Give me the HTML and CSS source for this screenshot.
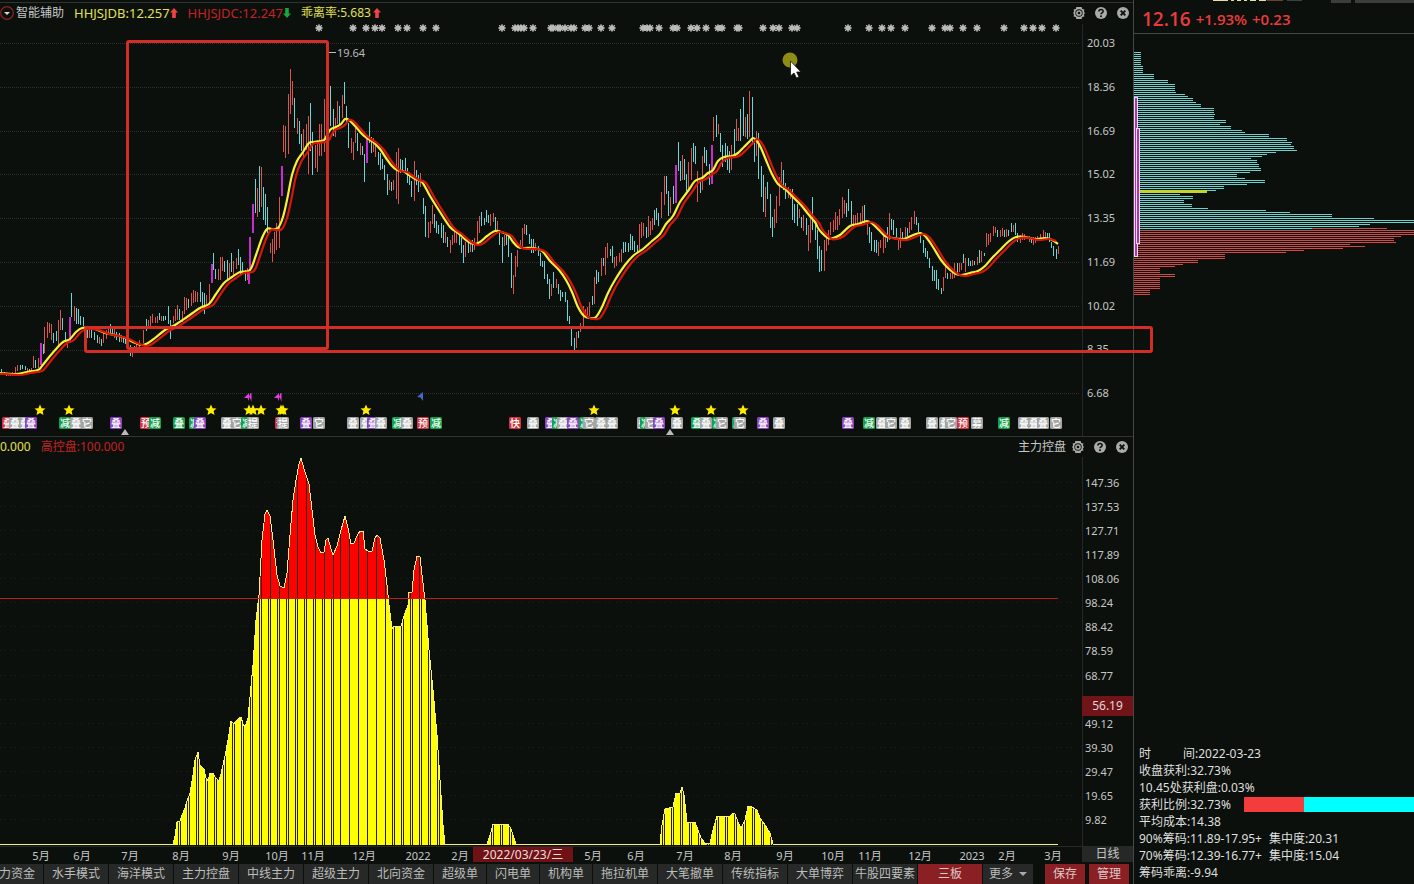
FILE: index.html
```html
<!DOCTYPE html>
<html lang="zh-CN">
<head>
<meta charset="utf-8">
<title>主力控盘</title>
<link rel="stylesheet" href="styles.css">
</head>
<body>
<svg class="defs" aria-hidden="true">
  <defs>
    <symbol id="gear" viewBox="0 0 14 14">
      <path d="M4.4 1h5.2l.6 2 2.2.4-.5 2.1 1 1.5-1 1.5.5 2.1-2.2.4-.6 2H4.4l-.6-2-2.2-.4.5-2.1-1-1.5 1-1.5-.5-2.1 2.2-.4z" fill="#a9aaa9"/>
      <circle cx="7" cy="7" r="3.7" fill="#0c100d"/><circle cx="7" cy="7" r="2.1" fill="none" stroke="#a9aaa9" stroke-width="1.5"/>
    </symbol>
    <symbol id="help" viewBox="0 0 14 14">
      <circle cx="7" cy="7" r="6" fill="#a9aaa9"/>
      <path d="M4.9 5.6C4.9 2.9 9.2 2.9 9.1 5.4 9.1 6.8 7 6.8 7 8.3" fill="none" stroke="#0c100d" stroke-width="1.6"/><circle cx="7" cy="10.3" r="1" fill="#0c100d"/>
    </symbol>
    <symbol id="close" viewBox="0 0 14 14">
      <circle cx="7" cy="7" r="6" fill="#a9aaa9"/><path d="M4.7 4.7l4.6 4.6m0-4.6L4.7 9.3" stroke="#0c100d" stroke-width="1.9"/>
    </symbol>
    <symbol id="arrow" viewBox="0 0 8 10"><path d="M4 0l4 4.6H5.8V10H2.2V4.600H0z" fill="currentColor"/></symbol>
  </defs>
</svg>
<div class="app">
  <main class="charts">
    <section class="panel">
      <header class="panel-head">
        <div class="legend">
          <button class="icon-btn" aria-label="展开"><svg width="14" height="14" viewBox="0 0 14 14"><circle cx="7" cy="7" r="6.300" fill="none" stroke="#8e2222" stroke-width="1.2"/><path d="M4 6h6L7 9z" fill="#d8d8d8"/></svg></button>
          <span class="title">智能辅助</span>
          <span class="reading yellow">HHJSJDB:12.257<svg class="up"><use href="#arrow"/></svg></span>
          <span class="reading red">HHJSJDC:12.247<svg class="down"><use href="#arrow"/></svg></span>
          <span class="reading small yellow">乖离率:5.683<svg class="up"><use href="#arrow"/></svg></span>
        </div>
        <div class="tools">
          <button class="icon-btn" aria-label="设置"><svg><use href="#gear"/></svg></button>
          <button class="icon-btn" aria-label="帮助"><svg><use href="#help"/></svg></button>
          <button class="icon-btn" aria-label="关闭"><svg><use href="#close"/></svg></button>
        </div>
      </header>
      <div class="plot">
        <svg id="price" class="chart" viewBox="0 24 1082 412"></svg>
        <ol class="axis price-axis"><li>20.03</li><li>18.36</li><li>16.69</li><li>15.02</li><li>13.35</li><li>11.69</li><li>10.02</li><li>8.35</li><li>6.68</li></ol>
      </div>
    </section>
    <section class="panel second">
      <header class="panel-head low">
        <div class="legend wide"><span class="yellow">0.000</span><span class="red">高控盘:100.000</span></div>
        <div class="tools"><span class="title">主力控盘</span>
          <button class="icon-btn" aria-label="设置"><svg><use href="#gear"/></svg></button>
          <button class="icon-btn" aria-label="帮助"><svg><use href="#help"/></svg></button>
          <button class="icon-btn" aria-label="关闭"><svg><use href="#close"/></svg></button>
        </div>
      </header>
      <div class="plot">
        <svg id="control" class="chart" viewBox="0 457 1082 407"></svg>
        <div class="axis-col">
          <ol class="axis control-axis"><li>147.36</li><li>137.53</li><li>127.71</li><li>117.89</li><li>108.06</li><li>98.24</li><li>88.42</li><li>78.59</li><li>68.77</li><li></li><li>49.12</li><li>39.30</li><li>29.47</li><li>19.65</li><li>9.82</li></ol>
          <output class="axis-mark">56.19</output>
          <button class="period">日线</button>
        </div>
      </div>
    </section>
    <nav class="toolbar">
      <button>主力资金</button><button>水手模式</button><button>海洋模式</button><button>主力控盘</button><button>中线主力</button><button>超级主力</button><button>北向资金</button><button class="short">超级单</button><button class="short">闪电单</button><button class="short">机构单</button><button>拖拉机单</button><button>大笔撤单</button><button>传统指标</button><button>大单博弈</button><button>牛股四要素</button><button class="on">三板</button><button class="more">更多<svg width="8" height="4" viewBox="0 0 8 4"><path d="M0 0h8L4 4z" fill="#aaa"/></svg></button><button class="on act first">保存</button><button class="on act">管理</button>
    </nav>
  </main>
  <aside class="side">
    <svg class="cut" viewBox="0 0 280 4" aria-hidden="true"><path d="M79 0h15v1H79zM97 0h3v1h-3zM103 0h4v1h-4zM110 0h3v1h-3zM116 0h6v1h-6zM125 0h7v1h-7z" fill="#e6dfa0"/><path d="M133 0h16v1h-16z" fill="#6e4034"/><path d="M153 0h15v1h-15z" fill="#3a4340"/><path d="M197 0h20v3h-20zM221 0h59v3h-59z" fill="#3b3e3c"/></svg>
    <div class="quote"><strong>12.16</strong><span>+1.93%</span><span>+0.23</span></div>
    <svg id="chips" class="chart" viewBox="1134 34 280 270"></svg>
    <div class="info">
      <p><span class="spread">时</span>间:2022-03-23</p>
      <p>收盘获利:32.73%</p>
      <p>10.45处获利盘:0.03%</p>
      <p class="ratio"><span>获利比例:32.73%</span><i class="bar"><b></b></i></p>
      <p>平均成本:14.38</p>
      <p>90%筹码:11.89-17.95+ <span class="gap">集中度:20.31</span></p>
      <p>70%筹码:12.39-16.77+ <span class="gap">集中度:15.04</span></p>
      <p>筹码乖离:-9.94</p>
    </div>
  </aside>
  <div class="mark tall"></div>
  <div class="mark flat"></div>
</div>
<script src="chart.js"></script>
</body>
</html>
```
FILE: styles.css
```css
* { box-sizing: border-box; }
body { margin: 0; background: #0c100d; color: #c6c7c6; font: 12px/16px "Noto Sans", "Noto Sans CJK SC", sans-serif; overflow-x: hidden; }
button { font: inherit; color: inherit; border: 0; padding: 0; background: none; white-space: nowrap; }
p, ol { margin: 0; padding: 0; list-style: none; }
.defs { position: absolute; width: 0; height: 0; }
.app { position: relative; display: flex; min-height: 100vh; }
.charts { flex: 1; min-width: 0; display: flex; flex-direction: column; overflow: hidden; }
.second { border-top: 1px solid #303331; }
.panel-head { display: flex; justify-content: space-between; align-items: center; height: 24px; padding: 2px 3px 0 0; background: linear-gradient(#303331, #303331) 0 2px / 100% 1px no-repeat; }
.panel-head.low { height: 20px; padding: 0 4px 0 0; background: none; }
.legend { display: flex; align-items: center; gap: 10px; font-size: 12px; }
.legend .icon-btn { margin-right: -8px; }
.icon-btn, .icon-btn svg { display: block; width: 14px; height: 14px; }
.tools { display: flex; align-items: center; gap: 8px; }
.tools .title { margin-right: -3px; }
.reading { display: flex; align-items: center; gap: 0; font-size: 13px; }
.reading.small { gap: 2px; font-size: 12px; }
.reading svg { width: 8px; height: 10px; }
.yellow { color: #e2e052; }
.red { color: #c42222; }
.up { color: #f04444; }
.down { color: #16a83c; transform: rotate(180deg); }
.plot { display: grid; grid-template-columns: minmax(0, 1fr) 51px; }
.chart { display: block; width: 100%; height: auto; font-family: "Noto Sans", "Noto Sans CJK SC", sans-serif; }
.axis { display: flex; flex-direction: column; justify-content: space-between; border-left: 1px solid #262927; font-size: 11px; }
.axis li { height: 16px; }
.price-axis { padding: 11px 0 35px 4px; }
.control-axis { flex: 1; padding: 18px 0 18px 2px; }
.axis-col { position: relative; display: flex; flex-direction: column; }
.axis-mark { position: absolute; top: 239px; left: 0; right: 0; height: 20px; line-height: 20px; text-align: center; background: #701418; color: #e4d6d6; }
.period { height: 16px; margin: 0 0 2px; background: #252827; line-height: 16px; }
.toolbar { display: flex; gap: 1px; margin-left: -21px; height: 20px; }
.toolbar button { flex: 0 0 64px; height: 20px; background: #262927; color: #bcbdbc; line-height: 20px; }
.toolbar .short { flex-basis: 52px; }
.toolbar .on { background: #8a2024; color: #dcc8c8; }
.toolbar .more { flex-basis: 50px; }
.more svg { margin-left: 6px; vertical-align: 2px; }
.toolbar .act { flex-basis: 40px; margin-left: 3px; }
.toolbar .first { margin-left: 11px; }
.side { flex: 0 0 281px; display: flex; flex-direction: column; border-left: 1px solid #454846; }
.cut { display: block; width: 100%; height: 4px; }
.quote { display: flex; align-items: center; gap: 5px; height: 30px; padding-left: 8px; border-bottom: 1px solid #454846; color: #e83c3c; font: 600 15px/28px "Open Sans", "Noto Sans", sans-serif; }
.quote strong { font-size: 19px; font-weight: 600; }
.info { margin-top: auto; padding: 0 0 3px 5px; color: #dedfde; }
.info p { height: 17px; line-height: 17px; white-space: pre; }
.spread { margin-right: 32px; }
.gap { margin-left: 4px; }
.info .ratio { display: flex; align-items: center; }
.ratio span { flex: 0 0 105px; }
.bar { flex: 1; height: 15px; background: #00ffff; }
.bar b { display: block; width: 35%; height: 15px; background: #f43c3c; }
.mark { position: absolute; border: 3px solid #d22e26; border-radius: 3px; pointer-events: none; }
.mark.tall { left: 126px; top: 40px; width: 203px; height: 310px; }
.mark.flat { left: 84px; top: 326px; width: 1069px; height: 27px; }
.grid { stroke: #2a302b; stroke-dasharray: 1 1; }
.grid.dim { stroke: #1d211e; stroke-dasharray: 1 3 1 6; }
.tick { fill: #c6c7c6; font-size: 11px; text-anchor: middle; }
.tick.now { fill: #f0dede; font-size: 12px; }
.peak { fill: #b9bab9; font-size: 11px; }
.tag { fill: #ffffff; font-size: 10px; font-weight: 500; text-anchor: middle; }
```
FILE: chart.js
```js
const NS = 'http://www.w3.org/2000/svg';
function add(parent, name, attrs, text) {
  const el = document.createElementNS(NS, name);
  for (const k in attrs) el.setAttribute(k, attrs[k]);
  if (text) el.textContent = text;
  parent.appendChild(el);
  return el;
}
const nums = s => s.trim().split(/\s+/).map(t => t.split(',').map(Number));

// x, high, low
const up = nums(`4,372,375 8,373,376 12,372,376 15,367,373 17,365,371 27,368,371 31,368,372 33,356,368 38,358,368 44,327,353 47,322,338 49,323,333 51,324,340 58,320,345 60,310,330 67,340,348 74,306,321 89,330,338 99,337,344 103,333,343 106,330,339 108,326,335 114,328,338 121,335,342 132,349,357 136,344,350 139,340,348 143,330,343 148,320,329 150,316,326 152,314,323 155,317,323 157,316,323 161,316,321
173,316,323 175,309,321 177,305,320 182,311,322 184,297,314 186,298,310 191,293,306 193,290,303 195,291,302 197,292,302 206,295,307 209,284,303 218,269,280 220,257,280 222,257,271 229,263,279 233,261,275 236,258,269 247,268,280 257,188,217 261,167,207 270,243,253 272,239,262 274,232,254 276,223,250 279,197,248 283,125,152 285,126,158 288,94,154 290,69,114 292,81,105 297,118,134 303,129,157 306,124,150 308,116,174 315,145,168 317,140,172 319,124,156 321,124,156 324,99,152 326,110,145
335,118,137 337,101,124 342,95,118 351,138,153 353,142,160 355,128,143 360,143,155 373,138,152 375,143,157 389,180,190 393,180,190 396,152,199 398,148,204 414,161,201 420,173,187 428,222,238 430,221,233 432,205,224 445,232,243 450,240,253 452,235,245 454,232,243 456,233,243 465,242,257 470,240,252 474,238,250 477,221,243 479,216,233 490,214,226 493,213,222 497,221,230 504,235,246 513,275,294 515,256,277 517,250,267 520,240,248 522,228,246 524,224,234 535,243,251 551,284,296 556,279,288 576,332,348 580,323,332 583,306,326 585,309,317 587,307,315 589,302,316 594,277,304 601,258,276 605,247,275 607,243,258 614,257,268 616,256,266 619,253,262 621,249,262
639,224,250 641,222,238 643,223,236 648,216,237 650,221,235 652,218,230 661,192,218 664,176,205 670,197,213 682,155,180 688,162,190 691,148,180 697,171,202 702,156,190 713,117,141 718,124,134 731,145,170 736,119,141 738,128,141 745,117,137 749,91,137 756,131,156 765,187,217 774,209,228 776,196,223 779,177,206 781,162,187 788,187,198 790,189,199 799,209,218 803,215,231 808,225,251 810,213,243 824,240,271 826,233,251 828,230,245 830,222,235 833,220,232 835,212,230 837,216,230 839,209,225 842,197,218 844,200,214 853,215,227 855,215,226 857,213,225 860,213,225 862,206,222 867,222,235 878,242,256 880,240,248 883,235,253 885,233,248 889,213,240 898,238,250 900,228,248 905,227,237 909,222,233 911,217,230 914,211,224
943,277,291 945,266,278 950,273,279 952,268,279 954,263,278 959,263,272 961,263,270 965,258,272 972,260,266 977,257,265 981,251,262 986,233,247 988,234,245 990,233,242 993,226,236 995,227,233 1000,230,237 1002,228,236 1006,229,237 1013,225,232 1020,235,243 1022,233,240 1024,234,240 1029,236,242 1033,237,245 1035,237,243 1037,236,241 1040,234,240 1043,230,238 1045,232,238 1058,246,254`);
const down = nums(`1,369,372 6,373,376 10,373,376 20,365,370 22,365,369 25,366,370 29,369,372 35,360,368 43,344,354 53,333,343 56,331,341 62,318,330 65,332,341 71,293,317 76,308,324 78,309,324 80,316,325 83,317,326 87,330,338 91,330,338 94,332,340 97,335,343 101,339,346 110,324,333 112,328,336 116,332,340 119,333,342 123,337,343 125,337,344 130,345,356 134,346,353 146,319,331 159,313,320 163,316,321 165,316,320 168,306,324 170,320,339 179,309,320 188,299,308 200,282,302 202,292,306 204,293,314 213,253,270 215,269,279 224,261,272 227,260,281 231,253,272 238,249,265 240,257,275 242,262,273 245,270,281
255,179,213 259,166,212 263,187,220 265,194,225 267,207,233 294,98,128 299,121,144 301,134,151 310,103,151 312,132,175 330,86,126 333,109,136 339,106,125 344,82,104 346,106,122 348,123,148 357,133,151 362,146,155 364,154,182 369,122,143 371,137,153 378,152,165 380,153,170 382,159,169 384,165,180 387,174,195 391,182,191 400,159,173 402,160,171 405,158,172 407,168,183 409,172,185 411,181,197 416,170,185 418,175,192 423,198,214 425,206,237 434,214,228 436,221,233 438,225,234 441,223,238 443,225,243 447,237,247 459,235,245 461,238,253 463,245,263 468,240,253 472,240,252 481,212,226 484,218,225 486,210,222 488,215,223 495,217,231 499,230,245 502,237,263 506,234,245 508,235,257 511,253,288 526,225,235 529,234,244 531,239,253 533,239,253 538,246,256 540,253,266 542,261,267 544,261,279 547,274,284 549,279,299 553,272,288 558,284,294 560,290,301 562,292,297 565,292,302 567,300,321 569,316,324 571,327,346 574,338,350 578,331,338 592,296,305 596,270,284 598,272,282 603,258,266 610,249,256 612,246,263 623,242,253 625,242,252 628,243,252 630,234,250 632,236,250 634,241,252 637,245,253 646,227,238
654,210,225 656,208,220 658,213,226 666,176,194 668,191,216 673,186,204 678,142,171 680,161,181 684,159,180 686,174,191 693,143,162 695,146,164 700,180,193 704,147,163 706,150,166 709,164,185 716,115,137 720,133,152 722,145,167 725,143,162 727,146,170 729,151,173 734,129,155 740,109,141 743,97,136 747,114,139 752,97,145 754,143,162 758,133,179 761,166,197 763,175,212 767,182,199 770,194,228 772,217,237 783,170,190 785,183,199 792,189,220 794,204,223 797,204,226 801,217,228 806,218,235 812,197,230 815,223,240 817,230,259 819,246,272 821,250,271 846,203,217 848,189,211 851,201,224 864,205,225 869,227,243 871,232,251 874,240,252 876,240,253 887,227,242 891,219,230 893,220,235 896,228,237 902,232,239 907,228,236 916,217,225 918,223,232 920,233,243 923,240,253 925,248,257 927,251,259 929,258,268 932,266,281 934,270,281 936,270,289 938,279,290 941,288,294 947,273,279 957,263,273 963,254,263 968,258,266 970,261,266 974,261,265 979,250,263 984,253,256 997,230,237 1004,230,237 1008,230,236 1011,223,232 1015,223,235 1017,233,242 1031,237,243 1047,233,240 1049,233,242 1051,242,248 1053,246,256 1056,249,259`);
const strong = nums(`40,343,365 69,317,343 211,264,283 248,272,284 249,237,270 252,204,233 281,166,196 366,135,163 675,165,203 711,145,184`);
const average = nums(`0,373 15,374 27,372 38,370 42,366 50,356 57,348 63,342 70,339 76,332 82,328 88,328 95,329 105,333 115,335 125,338 133,342 142,345 148,343 155,338 165,330 175,325 187,317 200,308 209,304 216,294 224,283 232,277 240,272 250,270 256,255 262,238 267,229 272,229 278,228 283,217 287,200 292,175 297,161 303,152 309,143 314,142 321,141 325,139 330,130 336,127 341,124 345,119 349,120 356,127 362,134 367,138 373,142 380,149 386,158 392,166 397,170 403,171 409,175 415,179 422,182 430,196 440,212 450,227 458,233 466,240 474,244 480,242 487,236 495,231 501,232 508,235 513,242 518,247 524,248 533,248 542,251 550,261 559,270 566,280 572,292 578,307 584,316 590,318 596,317 602,307 608,293 615,280 625,265 634,255 643,249 652,241 660,234 666,224 673,216 680,202 688,191 695,181 702,178 708,173 713,170 718,161 724,157 732,156 738,153 744,147 750,141 753,138 757,141 761,148 766,160 772,174 778,184 785,189 793,197 801,205 809,215 815,222 818,228 822,233 828,238 833,238 840,235 850,226 858,224 867,221 873,224 879,230 885,236 893,238 903,239 911,236 920,233 926,237 933,247 941,260 949,269 956,274 962,275 970,273 978,271 985,266 992,258 1000,250 1008,242 1016,237 1025,237 1035,239 1045,238 1052,240 1058,244`);

const price = document.getElementById('price');
for (const y of [43, 87, 131, 174, 218, 262, 306, 350, 393]) add(price, 'path', { class: 'grid', d: `M0 ${y}.5H1080` });
function candles(list, color, w) {
  add(price, 'path', { d: list.map(([x, a, b]) => `M${x} ${a}h${w}V${b}h-${w}z`).join(''), fill: color, 'shape-rendering': 'crispEdges' });
}
candles(up, '#dc5450', 1);
candles(down, '#6cd4d2', 1);
candles(strong, '#c82ccc', 2);
const lagged = average.slice(0, -1).map(([x, y]) => [x + 4, y]).filter(p => p[0] <= 1058);
// Catmull-Rom smoothing
function curve(p) {
  let d = `M${p[0]}`;
  for (let i = 0; i < p.length - 1; i++) {
    const a = p[i - 1] || p[i], b = p[i], c = p[i + 1], e = p[i + 2] || c;
    d += `C${b[0] + (c[0] - a[0]) / 6} ${b[1] + (c[1] - a[1]) / 6} ${c[0] - (e[0] - b[0]) / 6} ${c[1] - (e[1] - b[1]) / 6} ${c}`;
  }
  return d;
}
add(price, 'path', { d: curve(average), fill: 'none', stroke: '#f8f236', 'stroke-width': 2.2 });
add(price, 'path', { d: curve([[0, 374], ...lagged.map(([x, y]) => [x, y + 1])]), fill: 'none', stroke: '#d8160a', 'stroke-width': 2.2 });

for (const x of [319,353,366,375,382,398,407,423,436,502,515,518,521,524,533,551,553,558,560,565,571,574,585,589,601,612,643,647,650,659,673,677,691,697,706,718,722,737,739,763,773,779,792,797,848,869,882,891,905,932,945,950,963,977,1004,1024,1033,1042,1056]) {
  add(price, 'circle', { cx: x, cy: 28, r: 2.8, fill: '#c9cac9' });
  add(price, 'path', { d: `M${x - 4} 28h8M${x} 24v8M${x - 3} 25l6 6M${x + 3} 25l-6 6`, stroke: '#b4b5b4', 'stroke-width': 1 });
}
for (const x of [40,69,211,249,253,261,281,283,366,594,675,711,743])
  add(price, 'path', { d: `M${x} 404.500l1.600 3.700 3.900.3-2.900 2.600.9 3.900-3.500-2.100-3.500 2.100.9-3.900-2.900-2.600 3.900-.3z`, fill: '#ffec00' });
for (const x of [244, 274]) {
  add(price, 'path', { d: `M${x} 398l5-5v8l-1.500-3zM${x + 5} 397l1.500-4h1v9l-1-3z`, fill: '#e83ce8' });
}
add(price, 'path', { d: 'M417 397l6-5v9l-2.500-3.500z', fill: '#4468d0' });
for (const x of [125, 670]) add(price, 'path', { d: `M${x} 429l4 6h-8z`, fill: '#b9bab9' });

const tone = { r: '#cf3440', w: '#a3a5a4', p: '#8b45bd', g: '#12a04a' };
for (const t of '2r叠 9w叠 19w叠 25p叠 59g减 70w叠 81w它 110p叠 140r预 149g减 173g叠 189g减 194p叠 221w叠 231w它 241g减 247w提 275r预 277w提 300p叠 313w它 347w叠 360w叠 367p叠 375w叠 392g减 401w叠 417r预 430g减 509r快 527w叠 545p叠 552g减 557w叠 567p叠 579g减 583w它 595w叠 606w叠 637w叠 640g减 645w它 653p叠 671w叠 691g叠 700w叠 712g减 716w它 732g减 734w它 757p叠 773w叠 842p叠 863g减 876w叠 885w它 899w叠 926w叠 939w叠 945w它 957r预 971w募 998g减 1018w叠 1028w叠 1037w叠 1050w它'.split(' ')) {
  const [, x, k, label] = t.match(/(\d+)(\w)(.)/);
  add(price, 'rect', { x, y: 417, width: 12, height: 12, rx: 1.5, fill: tone[k] });
  add(price, 'text', { class: 'tag', x: +x + 6, y: 427 }, label);
}
add(price, 'path', { d: 'M329 52.500h7', stroke: '#b9bab9' });
add(price, 'text', { class: 'peak', x: 337, y: 57 }, '19.64');
add(price, 'circle', { cx: 790, cy: 60, r: 7.500, fill: '#8e8c12' });
add(price, 'path', { d: 'M790.500 61v15l3.500-3 2.500 5 2.500-1-2.300-5h4.300z', fill: '#fff', stroke: '#111', 'stroke-width': 0.8 });

// Control-ratio histogram
const control = document.getElementById('control');
for (let i = 0; i < 15; i++) add(control, 'path', { class: 'grid dim', d: `M0 ${Math.round(482 + i * 24.07)}.5H1075` });
const outline = nums(`0,844 173,844 175,836 177,822 180,821 182,815 185,808 187,801 190,793 193,775 195,760 198,752 200,765 204,769 206,778 208,781 210,773 213,773 215,777 219,781 221,774 225,756 228,740 231,721 234,724 237,720 241,717 243,724 245,727 248,718 250,697 253,665 256,620 259,595 262,540 265,514 267,510 270,516 273,540 277,575 280,586 284,588 287,573 290,535 293,500 296,480 299,464 301,458 304,469 309,484 312,510 315,535 318,547 321,553 324,552 326,540 328,538 331,549 333,555 337,546 341,530 345,516 348,528 351,544 354,543 357,536 360,531 363,531 365,549 369,552 372,551 375,538 377,535 380,538 384,560 387,585 389,605 392,629 394,626 401,626 405,613 408,605 409,592 412,592 414,570 417,556 420,557 422,575 425,600 429,650 433,690 437,735 440,780 443,825 445,844 487,844 491,832 493,824 508,824 511,829 514,838 516,844 660,844 662,825 665,809 673,807 676,793 680,793 682,787 684,795 687,822 695,822 698,830 701,838 705,843 710,843 713,830 717,816 730,816 733,813 735,814 738,822 741,828 745,820 748,806 752,807 757,810 760,818 765,825 770,833 773,844 1058,844`);
const d = 'M' + outline.join('L');
const defs = add(control, 'defs', {});
add(add(defs, 'clipPath', { id: 'area' }), 'path', { d: d + 'V845H0z' });
const body = add(control, 'g', { 'clip-path': 'url(#area)', 'shape-rendering': 'crispEdges' });
add(body, 'rect', { x: 0, y: 599, width: 1058, height: 246, fill: '#ffff00' });
add(body, 'rect', { x: 0, y: 457, width: 1058, height: 142, fill: '#ff0000' });
let single = '', pair = '';
for (let x = 178; x < 1058; x += 9) {
  if (x < 335) { single += `M${x + 2} 457h1V845h-1z`; pair += `M${x} 599h1V845h-1z`; }
  else if (x < 390) single += `M${x} 457h1V845h-1z`;
  else { single += `M${x - 2} 457h1V845h-1z`; pair += `M${x} 599h1V845h-1z`; }
}
add(body, 'path', { d: single, fill: '#241c06' });
add(body, 'path', { d: pair, fill: '#241c06' });
add(control, 'path', { d, fill: 'none', stroke: '#f4f08a', 'shape-rendering': 'crispEdges' });
add(control, 'path', { d: 'M0 598.500H1058', stroke: '#c01c18' });
add(control, 'path', { d: 'M0 846.500H1082', stroke: '#262927' });
add(control, 'rect', { x: 473, y: 847, width: 100, height: 15, fill: '#6e1216' });
add(control, 'text', { class: 'tick now', x: 523, y: 859 }, '2022/03/23/三');
for (const t of '41:5月 82:6月 130:7月 181:8月 231:9月 277:10月 313:11月 364:12月 418:2022 460:2月 593:5月 636:6月 685:7月 733:8月 785:9月 833:10月 870:11月 920:12月 972:2023 1007:2月 1053:3月'.split(' ')) {
  const [x, label] = t.split(':');
  add(control, 'text', { class: 'tick', x, y: 860 }, label);
}

// Chip distribution: row count x bar length, top to bottom
const chips = document.getElementById('chips');
const rows = '7x7 4x9 3x20 2x34 4x41 1x42 1x51 1x54 2x59 1x62 2x67 3x80 1x81 2x80 2x92 1x86 2x97 1x108 1x111 2x135 2x153 1x158 1x157 2x160 1x163 1x142 1x133 1x128 1x117 2x123 2x125 2x127 1x116 2x103 1x111 2x131 1x113 2x90 1x82 1x70 1x46 2x59 2x50 2x58 1x74 1x132 1x156 2x198 1x240 2x280 1x236 1x225 1x178 3x280 1x267 2x260 1x262 1x216 1x231 1x209 1x170 1x152 3x91 2x64 1x49 1x41 3x26 2x41 6x26 3x16';
let y = 52;
for (const t of rows.split(' ')) {
  const [n, w] = t.split('x').map(Number);
  for (let i = 0; i < n; i++, y += 2)
    add(chips, 'rect', { x: 1134, y, width: w, height: 1, fill: y > 228 ? '#d04a48' : '#6cd0cc', 'shape-rendering': 'crispEdges' });
}
add(chips, 'path', { d: 'M1312 228.500h75', stroke: '#d04a48' });
add(chips, 'rect', { x: 1134, y: 190, width: 73, height: 3, fill: '#c4d42c' });
add(chips, 'rect', { x: 1134.5, y: 97.5, width: 3, height: 159, fill: '#a23aa8', stroke: '#f0d8f0' });
add(chips, 'rect', { x: 1136.5, y: 128.5, width: 3, height: 115, fill: '#a23aa8', stroke: '#f0d8f0' });
```
